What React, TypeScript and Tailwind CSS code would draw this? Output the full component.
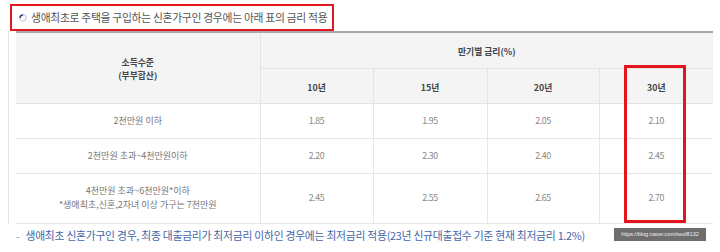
import React from "react";

const font = { fontFamily: '"Noto Sans CJK KR", "Noto Sans", sans-serif' };

const rows = [
  { label: ["2천만원 이하"], v: ["1.85", "1.95", "2.05", "2.10"], h: "h-[35px]" },
  { label: ["2천만원 초과~4천만원이하"], v: ["2.20", "2.30", "2.40", "2.45"], h: "h-[35px]" },
  {
    label: ["4천만원 초과~6천만원*이하", "*생애최초,신혼,2자녀 이상 가구는 7천만원"],
    v: ["2.45", "2.55", "2.65", "2.70"],
    h: "h-[50px]",
  },
];

export default function App() {
  return (
    <div className="relative w-[720px] h-[252px] bg-white overflow-hidden" style={font}>
      {/* Title */}
      <div className="pt-[4px] pl-[10px]">
        <div className="flex items-center w-[324px] h-[27px] border-2 border-[#e3161f] pl-[7px] gap-[4px]">
          <svg width="8" height="8" viewBox="0 0 8 8">
            <circle cx="4" cy="4" r="3" fill="none" stroke="#d3d6dc" strokeWidth="1.4" />
            <path d="M1 4 A3 3 0 0 1 4 1" fill="none" stroke="#2f4a8a" strokeWidth="1.6" />
          </svg>
          <span className="text-[10.8px] text-[#555] tracking-[-0.3px] leading-none">
            생애최초로 주택을 구입하는 신혼가구인 경우에는 아래 표의 금리 적용
          </span>
        </div>
      </div>

      {/* Table area */}
      <div className="ml-[8px] border-l border-[#e2e2e2] pl-[7px] w-[706px]">
        <table className="table-fixed border-collapse w-[697px] text-center">
          <colgroup>
            <col className="w-[244px]" />
            <col className="w-[113px]" />
            <col className="w-[114px]" />
            <col className="w-[112px]" />
            <col className="w-[114px]" />
          </colgroup>
          <thead>
            <tr className="h-[36px] border-t-2 border-[#a8a8a8]">
              <th
                rowSpan={2}
                className="bg-[#f4f4f4] border-r border-[#e3e3e3] text-[8.8px] font-bold text-[#444] leading-[13px] pt-[2px]"
              >
                소득수준
                <br />
                (부부합산)
              </th>
              <th
                colSpan={4}
                className="bg-[#f4f4f4] border-b border-[#e3e3e3] text-[8.8px] font-bold text-[#444] pt-[2px]"
              >
                만기별 금리(%)
              </th>
            </tr>
            <tr className="h-[35px] border-b border-[#e3e3e3]">
              {["10년", "15년", "20년", "30년"].map((t, i) => (
                <th
                  key={t}
                  className={`bg-[#f4f4f4] text-[8.8px] font-bold text-[#444] pt-[4px] ${
                    i < 3 ? "border-r border-[#e3e3e3]" : ""
                  }`}
                >
                  {t}
                </th>
              ))}
            </tr>
          </thead>
          <tbody>
            {rows.map((r, ri) => (
              <tr key={ri} className={`${r.h} border-b border-[#e6e6e6]`}>
                <td className="border-r border-[#e6e6e6] text-[9px] text-[#777] leading-[14px]">
                  {r.label.map((l, li) => (
                    <div key={li}>{l}</div>
                  ))}
                </td>
                {r.v.map((v, vi) => (
                  <td
                    key={vi}
                    className={`text-[8.8px] text-[#888] tracking-[-0.4px] ${
                      vi < 3 ? "border-r border-[#e6e6e6]" : ""
                    }`}
                  >
                    {v}
                  </td>
                ))}
              </tr>
            ))}
          </tbody>
        </table>
      </div>

      {/* Footnote */}
      <div className="flex items-center pl-[16px] pt-[4px] gap-[6px]">
        <span className="text-[10px] text-[#8a8a8a]">-</span>
        <span className="text-[10.8px] text-[#4466a8] tracking-[-0.25px] leading-none">
          생애최초 신혼가구인 경우, 최종 대출금리가 최저금리 이하인 경우에는 최저금리 적용(23년 신규대출접수 기준 현재 최저금리 1.2%)
        </span>
      </div>

      {/* Red highlight on 30년 column */}
      <div className="absolute left-[624px] top-[65px] w-[62px] h-[158px] border-[3px] border-[#e3161f]" />

      {/* Watermark */}
      <div className="absolute left-[614px] top-[228px] w-[92px] h-[13px] bg-[#6e6e6e] flex items-center justify-center">
        <span className="text-[5.5px] text-[#eee] leading-none" style={{ fontFamily: '"Liberation Sans", sans-serif' }}>
          https://blog.naver.com/seol8132
        </span>
      </div>
    </div>
  );
}
